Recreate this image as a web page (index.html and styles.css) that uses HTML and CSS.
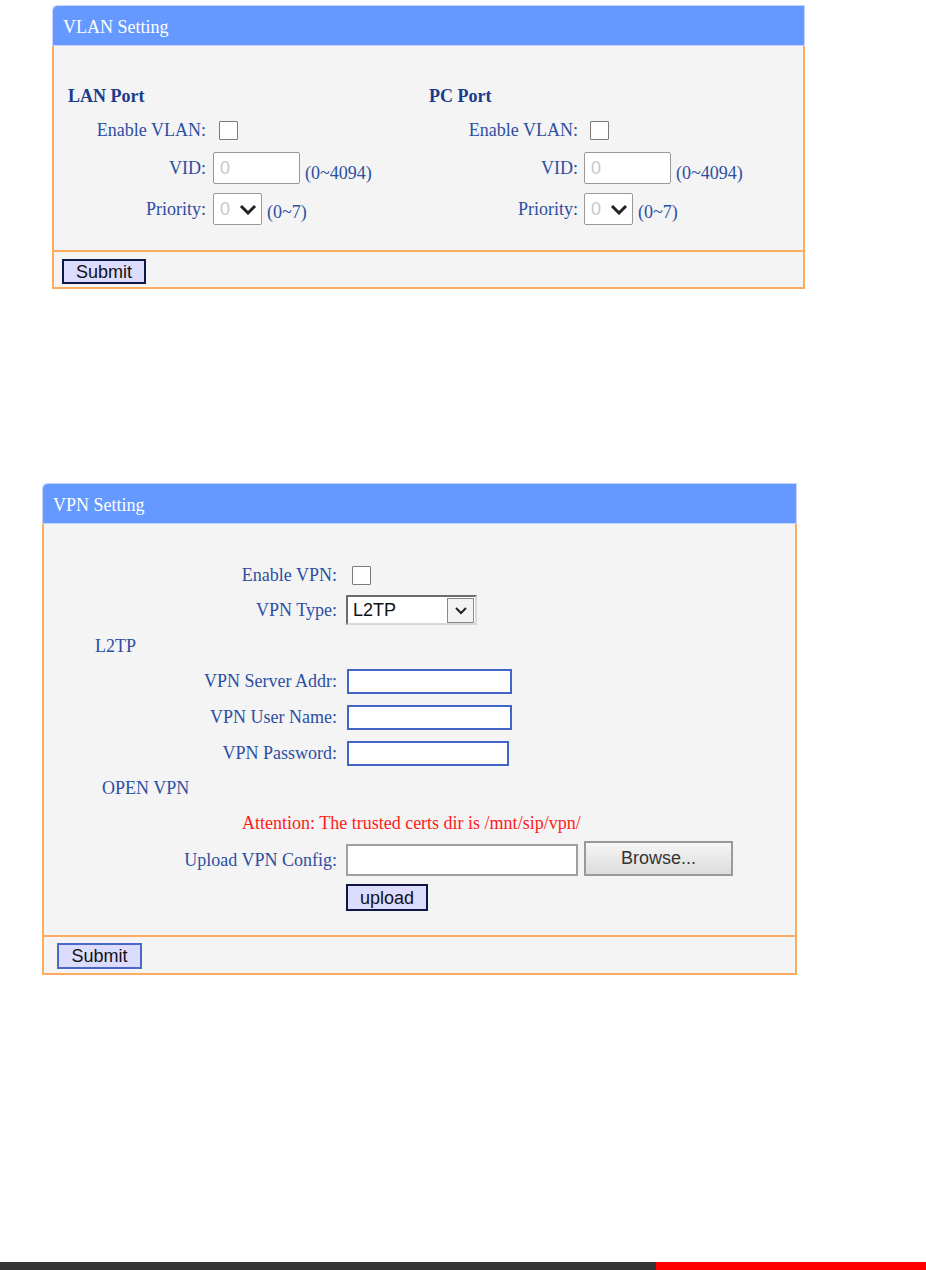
FILE: index.html
```html
<!DOCTYPE html>
<html lang="en">
  <head>
    <title>VLAN / VPN Setting</title>
    <meta charset="utf-8" />
    <link rel="stylesheet" href="styles.css">
  </head>
  <body>
    <div class="panel panel-vlan">
      <div class="panel-head">VLAN Setting</div>
      <div class="panel-body vlan-body">
        <div class="port port-lan">
          <h3 class="port-title">LAN Port</h3>
          <label class="lbl">Enable VLAN:</label>
          <span class="ctl"><input type="checkbox" class="chk" /></span>
          <label class="lbl">VID:</label>
          <span class="ctl"><input type="text" class="vid" value="0" disabled /><span class="range range-vid">(0~4094)</span></span>
          <label class="lbl">Priority:</label>
          <span class="ctl">
            <span class="sel"><span class="sel-val">0</span><svg width="18" height="11" viewBox="0 0 18 11"><path d="M2 2 L9 9 L16 2" fill="none" stroke="#222" stroke-width="3"/></svg></span>
            <span class="range range-prio">(0~7)</span>
          </span>
        </div>
        <div class="port port-pc">
          <h3 class="port-title">PC Port</h3>
          <label class="lbl">Enable VLAN:</label>
          <span class="ctl"><input type="checkbox" class="chk" /></span>
          <label class="lbl">VID:</label>
          <span class="ctl"><input type="text" class="vid" value="0" disabled /><span class="range range-vid">(0~4094)</span></span>
          <label class="lbl">Priority:</label>
          <span class="ctl">
            <span class="sel"><span class="sel-val">0</span><svg width="18" height="11" viewBox="0 0 18 11"><path d="M2 2 L9 9 L16 2" fill="none" stroke="#222" stroke-width="3"/></svg></span>
            <span class="range range-prio">(0~7)</span>
          </span>
        </div>
      </div>
      <div class="panel-foot foot-vlan">
        <button class="btn btn-dark btn-submit">Submit</button>
      </div>
    </div>

    <div class="panel panel-vpn">
      <div class="panel-head">VPN Setting</div>
      <div class="panel-body vpn-body">
        <label class="lbl">Enable VPN:</label>
        <span class="ctl"><input type="checkbox" class="chk" /></span>
        <label class="lbl">VPN Type:</label>
        <span class="ctl">
          <span class="win-sel"><span class="win-val">L2TP</span><span class="win-btn"><svg width="14" height="9" viewBox="0 0 14 9"><path d="M2 2 L7 7 L12 2" fill="none" stroke="#222" stroke-width="2"/></svg></span></span>
        </span>
        <div class="sub sub-l2tp">L2TP</div>
        <label class="lbl">VPN Server Addr:</label>
        <span class="ctl"><input type="text" class="txt" /></span>
        <label class="lbl">VPN User Name:</label>
        <span class="ctl"><input type="text" class="txt" /></span>
        <label class="lbl">VPN Password:</label>
        <span class="ctl"><input type="password" class="txt txt-pw" /></span>
        <div class="sub sub-open">OPEN VPN</div>
        <div class="note">Attention: The trusted certs dir is /mnt/sip/vpn/</div>
        <label class="lbl">Upload VPN Config:</label>
        <span class="ctl"><span class="file-box"></span><button class="btn-browse">Browse...</button></span>
        <span class="ctl ctl-col2"><button class="btn btn-dark btn-upload">upload</button></span>
      </div>
      <div class="panel-foot foot-vpn">
        <button class="btn btn-blue btn-submit">Submit</button>
      </div>
    </div>

    <div class="page-foot">
      <div class="foot-dark"></div>
      <div class="foot-red"></div>
    </div>
  </body>
</html>
```

FILE: styles.css
```css
* {
  box-sizing: border-box;
}
body {
  margin: 0;
  min-height: 100vh;
  display: flex;
  flex-direction: column;
  background: #fff;
  font-family: "Liberation Serif", "Times New Roman", serif;
  font-size: 18px;
  color: #2c4fa2;
}
.panel {
  background: #f4f4f4;
}
.panel-vlan {
  width: 753px;
  margin: 5px 0 0 52px;
}
.panel-vpn {
  width: 755px;
  margin: 194px 0 0 42px;
}
.panel-head {
  height: 41px;
  padding: 4px 0 0 10px;
  background: #6699ff;
  border: 1px solid #c4d4ff;
  border-top-left-radius: 6px;
  color: #fff;
  line-height: 35px;
}
.panel-body {
  border: 2px solid #fdac5f;
  border-top: 0;
}
.panel-foot {
  border: 2px solid #fdac5f;
  border-top: 0;
}

/* VLAN */
.vlan-body {
  display: flex;
  padding: 35px 0 19px 14px;
}
.port {
  display: grid;
  grid-template-rows: 30px 38px 38px 44px;
  align-items: center;
}
.port-lan {
  width: 361px;
  grid-template-columns: 138px auto;
  column-gap: 7px;
}
.port-pc {
  grid-template-columns: 149px auto;
  column-gap: 6px;
}
.port-title {
  grid-column: 1 / -1;
  margin: 0;
  font-size: 18px;
  font-weight: bold;
  color: #1d3b8b;
}
.lbl {
  text-align: right;
  white-space: nowrap;
}
.ctl {
  display: flex;
  align-items: center;
}
.chk {
  appearance: none;
  width: 19px;
  height: 19px;
  margin: 0 0 0 6px;
  border: 1px solid #7a7a7a;
  border-radius: 1px;
  background: #fff;
}
.vid {
  width: 87px;
  height: 32px;
  margin: 0;
  padding: 0 6px;
  border: 1px solid #999;
  border-radius: 2px;
  background: #fff;
  font-family: "Liberation Sans", Arial, sans-serif;
  font-size: 18px;
  color: #c8c8c8;
}
.sel {
  display: flex;
  align-items: center;
  justify-content: space-between;
  width: 49px;
  height: 32px;
  padding: 0 4px 0 6px;
  border: 1px solid #999;
  border-radius: 2px;
  background: #fff;
  font-family: "Liberation Sans", Arial, sans-serif;
  color: #c8c8c8;
}
.range {
  margin-left: 5px;
}
.range-vid {
  margin-top: 10px;
}
.range-prio {
  margin-top: 6px;
}
.foot-vlan {
  padding: 7px 0 3px 8px;
}

/* buttons */
.btn {
  margin: 0;
  padding: 0;
  background: #dcdcff;
  font-family: "Liberation Sans", Arial, sans-serif;
  font-size: 18px;
  color: #111;
}
.btn-dark {
  border: 2px solid #0e1744;
}
.btn-blue {
  border: 2px solid #4a68c8;
}
.btn-submit {
  width: 84px;
  height: 25px;
  line-height: 20px;
}
.foot-vpn .btn-submit {
  width: 85px;
  height: 26px;
}

/* VPN */
.vpn-body {
  display: grid;
  grid-template-columns: 293px auto;
  grid-template-rows: 34px 36px 36px 35px 36px 36px 34px 36px 38px 37px;
  column-gap: 9px;
  align-items: center;
  padding: 34px 0 19px 0;
}
.sub {
  grid-column: 1 / -1;
}
.sub-l2tp {
  padding-left: 51px;
}
.sub-open {
  padding-left: 58px;
}
.note {
  grid-column: 1 / -1;
  padding-left: 198px;
  color: #ff1a1a;
}
.ctl-col2 {
  grid-column: 2;
}
.win-sel {
  display: flex;
  align-items: center;
  width: 131px;
  height: 30px;
  border-style: solid;
  border-width: 2px;
  border-color: #6d6d6d #d8d8d8 #d8d8d8 #6d6d6d;
  background: #fff;
  font-family: "Liberation Sans", Arial, sans-serif;
  color: #111;
}
.win-val {
  flex: 1;
  padding-left: 5px;
}
.win-btn {
  display: flex;
  align-items: center;
  justify-content: center;
  width: 27px;
  height: 25px;
  margin-right: 1px;
  border: 1px solid #8a8a8a;
  background: #f3f3f3;
}
.txt {
  width: 165px;
  height: 25px;
  margin: 0 0 0 1px;
  border: 2px solid #4266c8;
  background: #fff;
}
.txt-pw {
  width: 162px;
}
.file-box {
  width: 232px;
  height: 32px;
  border: 2px solid #a0a0a0;
  background: #fff;
}
.btn-browse {
  width: 149px;
  height: 35px;
  margin: -3px 0 0 6px;
  border: 2px solid #9a9a9a;
  background: linear-gradient(#f6f6f6, #dcdcdc);
  font-family: "Liberation Sans", Arial, sans-serif;
  font-size: 18px;
  color: #333;
}
.btn-upload {
  width: 82px;
  height: 27px;
  line-height: 22px;
}
.foot-vpn {
  padding: 6px 0 4px 13px;
}

/* page footer strip */
.page-foot {
  display: flex;
  height: 8px;
  margin-top: auto;
}
.foot-dark {
  flex: 0 0 656px;
  background: #333;
}
.foot-red {
  flex: 1;
  background: #ff0000;
}
```
